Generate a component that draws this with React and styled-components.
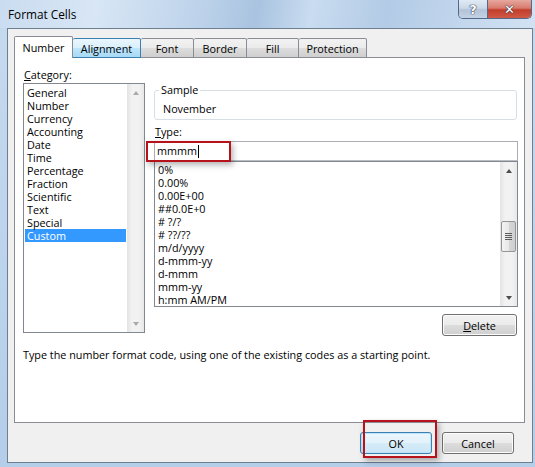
import React from 'react'
import styled, { createGlobalStyle } from 'styled-components'

const GlobalStyle = createGlobalStyle`
  html, body {
    margin: 0;
    padding: 0;
  }
  body {
    width: 535px;
    height: 467px;
    overflow: hidden;
    font-family: "Segoe UI", "Open Sans", sans-serif;
    font-size: 10.8px;
    color: #000;
  }
  * { box-sizing: border-box; }
`

const categories = [
  'General', 'Number', 'Currency', 'Accounting', 'Date', 'Time',
  'Percentage', 'Fraction', 'Scientific', 'Text', 'Special', 'Custom',
]

const formats = [
  '0%', '0.00%', '0.00E+00', '##0.0E+0', '# ?/?', '# ??/??',
  'm/d/yyyy', 'd-mmm-yy', 'd-mmm', 'mmm-yy', 'h:mm AM/PM',
]

const tabs = [
  { label: 'Number', w: 59, active: true },
  { label: 'Alignment', w: 68, hover: true },
  { label: 'Font', w: 53 },
  { label: 'Border', w: 53 },
  { label: 'Fill', w: 52 },
  { label: 'Protection', w: 68 },
]

const Window = styled.div`
  width: 535px;
  height: 467px;
  display: flex;
  flex-direction: column;
  background: linear-gradient(180deg, #c6daef 0%, #bcd3ec 60%, #b4cde9 100%);
`

const TitleBar = styled.div`
  height: 28px;
  flex: none;
  display: flex;
  align-items: flex-start;
  padding: 0 3px 0 8px;
  background: linear-gradient(100deg, #cadcf0 0%, #d8e6f5 18%, #bcd2ea 38%, #a9c3e0 48%, #c9dcf0 58%, #b3cbe6 72%, #c4d8ee 88%, #d2e2f3 100%);
`

const Title = styled.span`
  margin-top: 6px;
  font-size: 11.8px;
  line-height: 16px;
`

const CaptionGroup = styled.div`
  margin-left: auto;
  display: flex;
  height: 19px;
  border: 1px solid #54698a;
  border-top: none;
  border-radius: 0 0 5px 5px;
  overflow: hidden;
`

const CaptionButton = styled.div`
  width: ${p => p.$w}px;
  height: 18px;
  display: flex;
  align-items: center;
  justify-content: center;
  font-family: "DejaVu Sans", sans-serif;
  font-weight: bold;
  font-size: ${p => p.$fs}px;
  color: #fff;
  text-shadow: 0 0 1px #2d3b4f, 0 0 1px #2d3b4f, 0 0 1px #2d3b4f;
  background: ${p => p.$close
    ? 'linear-gradient(180deg, #e6a89f 0%, #d87a6c 45%, #c23d2c 55%, #cf5a45 100%)'
    : 'linear-gradient(180deg, #e1eaf4 0%, #cbd8e8 45%, #b3c3d8 55%, #c3d2e4 100%)'};
  border-left: ${p => p.$close ? '1px solid #54698a' : 'none'};
`

const Client = styled.div`
  flex: 1;
  margin: 0 2px 4px 7px;
  border: 1px solid #6f7f92;
  background: #f0f0f0;
  padding: 7px 7px 0 6px;
  display: flex;
  flex-direction: column;
`

const TabRow = styled.div`
  height: 22px;
  display: flex;
  align-items: flex-end;
  margin-bottom: -1px;
  position: relative;
  z-index: 1;
`

const Tab = styled.div`
  width: ${p => p.$w}px;
  height: ${p => p.$active ? 22 : 20}px;
  display: flex;
  align-items: center;
  justify-content: center;
  padding-top: ${p => p.$active ? 0 : 1}px;
  border: 1px solid ${p => p.$hover ? '#3c7fb1' : '#898c95'};
  border-bottom: ${p => p.$active ? 'none' : `1px solid ${p.$hover ? '#3c7fb1' : '#898c95'}`};
  border-left-width: ${p => p.$first ? 1 : 0}px;
  border-left-style: solid;
  border-radius: 2px 2px 0 0;
  background: ${p => p.$active
    ? '#fff'
    : p.$hover
      ? 'linear-gradient(180deg, #eaf6fd 0%, #d9f0fc 50%, #bee6fd 50%, #a7d9f5 100%)'
      : 'linear-gradient(180deg, #f2f2f2 0%, #ebebeb 50%, #dddddd 50%, #cfcfcf 100%)'};
`

const Panel = styled.div`
  height: 366px;
  flex: none;
  border: 1px solid #898c95;
  background: #fff;
  padding: 8px 5px 0 8px;
  display: grid;
  grid-template-columns: 122px 364px;
  column-gap: 9px;
  align-content: start;
`

const Column = styled.div`
  display: flex;
  flex-direction: column;
  align-items: flex-start;
`

const Label = styled.div`
  line-height: ${p => p.$lh || 14}px;
  margin-top: ${p => p.$mt || 0}px;
  margin-bottom: ${p => p.$mb || 0}px;
  padding-left: 1px;
  u { text-decoration: underline; }
`

const ListBox = styled.div`
  width: ${p => p.$w}px;
  height: ${p => p.$h}px;
  border: 1px solid #828790;
  background: #fff;
  display: flex;
`

const Rows = styled.div`
  flex: 1;
  padding: ${p => p.$pt ?? 2}px 1px 0;
`

const Row = styled.div`
  height: 13px;
  line-height: 13px;
  padding-left: 2px;
  white-space: nowrap;
  background: ${p => p.$selected ? '#3399ff' : 'transparent'};
  color: ${p => p.$selected ? '#fff' : '#000'};
`

const ScrollBar = styled.div`
  width: 17px;
  flex: none;
  display: flex;
  flex-direction: column;
  background: linear-gradient(90deg, #e3e3e3 0%, #f2f2f2 30%, #f2f2f2 70%, #e8e8e8 100%);
`

const ScrollArrow = styled.div`
  height: 17px;
  flex: none;
  display: flex;
  align-items: center;
  justify-content: center;
  &::before {
    content: '';
    width: 0;
    height: 0;
    border-left: 3.5px solid transparent;
    border-right: 3.5px solid transparent;
    ${p => p.$down
      ? `border-top: 4px solid ${p.$disabled ? '#a9a9a9' : '#4d4d4d'};`
      : `border-bottom: 4px solid ${p.$disabled ? '#a9a9a9' : '#4d4d4d'};`}
  }
`

const Track = styled.div`
  flex: 1;
  display: flex;
  flex-direction: column;
  align-items: center;
`

const Thumb = styled.div`
  width: 15px;
  height: 31px;
  margin-top: ${p => p.$offset}px;
  border: 1px solid #959595;
  border-radius: 2px;
  background: linear-gradient(90deg, #f3f3f3 0%, #e8e8e8 50%, #d6d6d6 51%, #cfcfcf 100%);
  display: flex;
  align-items: center;
  justify-content: center;
`

const GroupBox = styled.fieldset`
  width: 363px;
  margin: 17px 0 0 0;
  padding: 0 8px 3px;
  border: 1px solid #d5dfe5;
  border-radius: 3px;
  legend {
    margin-left: -4px;
    padding: 0 2px;
    line-height: 14px;
  }
`

const SampleText = styled.div`
  line-height: 14px;
  margin-top: 5px;
`

const FieldWrap = styled.div`
  position: relative;
  width: 364px;
`

const TextBox = styled.div`
  height: 20px;
  border: 1px solid #abadb3;
  border-bottom-color: #b9bcc3;
  background: #fff;
  padding-left: 2px;
  line-height: 18px;
  display: flex;
  align-items: center;
`

const Caret = styled.span`
  display: inline-block;
  width: 1px;
  height: 13px;
  background: #000;
  margin-left: 1px;
`

const Highlight = styled.div`
  position: absolute;
  left: ${p => p.$l}px;
  top: ${p => p.$t}px;
  width: ${p => p.$w}px;
  height: ${p => p.$h}px;
  border: 2px solid #b5121b;
  box-shadow: 2px 3px 6px rgba(0, 0, 0, 0.3);
  pointer-events: none;
  z-index: 2;
`

const Button = styled.button`
  width: ${p => p.$w}px;
  height: 22px;
  font: inherit;
  color: #000;
  padding: 0;
  border: 1px solid ${p => p.$default ? '#3c7fb1' : '#707070'};
  border-radius: 3px;
  background: ${p => p.$default
    ? 'linear-gradient(180deg, #eaf6fd 0%, #e3f2fb 50%, #d5ebf8 50%, #cce6f6 100%)'
    : 'linear-gradient(180deg, #f2f2f2 0%, #ebebeb 50%, #dddddd 50%, #cfcfcf 100%)'};
  box-shadow: inset 0 0 0 1px ${p => p.$default ? '#bde4fa' : '#fcfcfc'};
  u { text-decoration: underline; }
`

const DeleteRow = styled.div`
  width: 364px;
  display: flex;
  justify-content: flex-end;
  padding-right: 1px;
  margin-top: 7px;
`

const Description = styled.div`
  grid-column: 1 / -1;
  margin-top: 12px;
  line-height: 14px;
`

const Footer = styled.div`
  display: flex;
  justify-content: flex-end;
  gap: 10px;
  margin-top: 9px;
  padding-right: 11px;
`

const ButtonWrap = styled.div`
  position: relative;
`

const Grip = () => (
  <svg width="7" height="7" viewBox="0 0 7 7">
    {[0.5, 2.5, 4.5, 6.5].map(y => (
      <line key={y} x1="0" x2="7" y1={y} y2={y} stroke="#5b5b5b" strokeWidth="1" />
    ))}
  </svg>
)

const App = () => {
  return (
    <>
      <GlobalStyle />
      <Window>
        <TitleBar>
          <Title>Format Cells</Title>
          <CaptionGroup>
            <CaptionButton $w={28} $fs={13}>?</CaptionButton>
            <CaptionButton $w={44} $fs={13} $close>✕</CaptionButton>
          </CaptionGroup>
        </TitleBar>
        <Client>
          <TabRow>
            {tabs.map((t, i) => (
              <Tab key={t.label} $w={t.w} $active={t.active} $hover={t.hover} $first={i === 0}>
                {t.label}
              </Tab>
            ))}
          </TabRow>
          <Panel>
            <Column>
              <Label $lh={17}><u>C</u>ategory:</Label>
              <ListBox $w={122} $h={250}>
                <Rows>
                  {categories.map(c => (
                    <Row key={c} $selected={c === 'Custom'}>{c}</Row>
                  ))}
                </Rows>
                <ScrollBar>
                  <ScrollArrow $disabled />
                  <Track />
                  <ScrollArrow $down $disabled />
                </ScrollBar>
              </ListBox>
            </Column>
            <Column>
              <GroupBox>
                <legend>Sample</legend>
                <SampleText>November</SampleText>
              </GroupBox>
              <Label $mt={5} $mb={2}><u>T</u>ype:</Label>
              <FieldWrap>
                <TextBox>mmmm<Caret /></TextBox>
                <Highlight $l={-8} $t={0} $w={85} $h={21} />
              </FieldWrap>
              <ListBox $w={364} $h={146}>
                <Rows $pt={1}>
                  {formats.map(f => (
                    <Row key={f}>{f}</Row>
                  ))}
                </Rows>
                <ScrollBar>
                  <ScrollArrow />
                  <Track>
                    <Thumb $offset={42}><Grip /></Thumb>
                  </Track>
                  <ScrollArrow $down />
                </ScrollBar>
              </ListBox>
              <DeleteRow>
                <Button $w={75}><u>D</u>elete</Button>
              </DeleteRow>
            </Column>
            <Description>
              Type the number format code, using one of the existing codes as a starting point.
            </Description>
          </Panel>
          <Footer>
            <ButtonWrap>
              <Button $w={72} $default>OK</Button>
              <Highlight $l={3} $t={-12} $w={74} $h={38} />
            </ButtonWrap>
            <Button $w={72}>Cancel</Button>
          </Footer>
        </Client>
      </Window>
    </>
  )
}

export default App
